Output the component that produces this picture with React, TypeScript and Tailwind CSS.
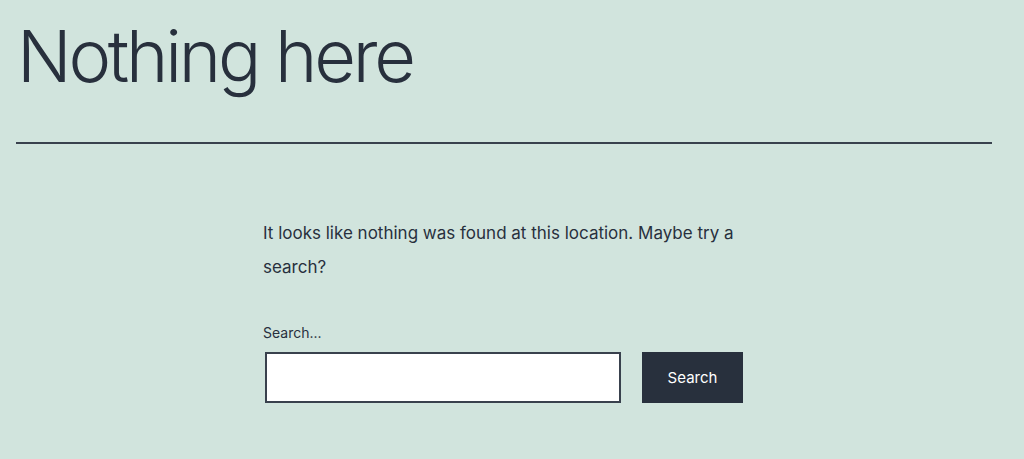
import React from 'react';

export default function App() {
  return (
    <div
      className="min-h-[459px] w-full bg-[#d1e4dd] text-[#28303d] overflow-hidden"
      style={{ fontFamily: 'Inter, "Liberation Sans", sans-serif' }}
    >
      <header className="px-4 pt-[13px]">
        <h1 className="text-[72px] font-light leading-[1.2] tracking-[-0.045em] pl-[1px]">Nothing here</h1>
        <div className="mt-[43px] mr-[16px] h-[2px] bg-[#39414d]" />
      </header>

      <main className="mx-auto w-[498px] pt-[72px]">
        <p className="text-[17px] leading-[34px]">
          It looks like nothing was found at this location. Maybe try a search?
        </p>

        <form className="mt-[40px]" onSubmit={(e) => e.preventDefault()}>
          <label className="block text-[14px] leading-[18px] mb-[10px]">Search...</label>
          <div className="flex items-center gap-[21px]">
            <input
              type="text"
              className="ml-[2px] h-[51px] w-[356px] border-2 border-[#39414d] bg-white outline-none"
            />
            <button
              type="submit"
              className="h-[51px] w-[101px] bg-[#28303d] text-[15px] text-white"
            >
              Search
            </button>
          </div>
        </form>
      </main>
    </div>
  );
}
